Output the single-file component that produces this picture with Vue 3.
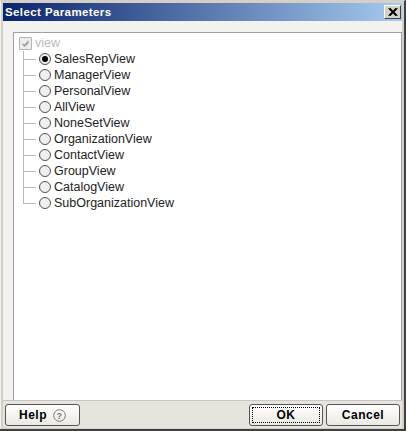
<script setup>
const views = ['SalesRepView','ManagerView','PersonalView','AllView','NoneSetView','OrganizationView','ContactView','GroupView','CatalogView','SubOrganizationView']
</script>

<template>
  <div class="window">
    <header class="titlebar">
      <span class="title">Select Parameters</span>
      <button class="close" aria-label="Close">
        <svg width="10" height="8" viewBox="0 0 10 8"><path d="M1.500 0.500L8.500 7.500M8.500 0.500L1.500 7.500" fill="none" stroke="#000" stroke-width="2"/><path d="M0 0h3M7 0h3M0 8h3M7 8h3" stroke="#000" stroke-width="1.200"/></svg>
      </button>
    </header>
    <div class="content">
      <div class="tree">
        <div class="root">
          <span class="check">
            <svg width="9" height="9" viewBox="0 0 9 9"><path d="M1.500 4l2 1.500L7.500 1v3.500L3.500 8l-2-2z" fill="#a0a0a0"/></svg>
          </span>
          <span class="rootlabel">view</span>
        </div>
        <div class="children">
          <div v-for="(v, i) in views" :key="v" class="row">
            <span class="connector"></span>
            <span class="radio" :class="{ on: i === 0 }"></span>
            <span class="label">{{ v }}</span>
          </div>
        </div>
      </div>
    </div>
    <footer class="footer">
      <button class="btn help">Help
        <svg class="q" width="13" height="13" viewBox="0 0 13 13"><circle cx="6.500" cy="6.500" r="5.800" fill="none" stroke="#777"/><text x="6.500" y="10" text-anchor="middle" font-size="9" fill="#777" font-family="Liberation Sans">?</text></svg>
      </button>
      <div class="spacer"></div>
      <button class="btn ok"><span class="focus">OK</span></button>
      <button class="btn cancel">Cancel</button>
    </footer>
  </div>
</template>

<style>
html, body { margin: 0; padding: 0; background: #d4d0c8; }
</style>

<style scoped>
.window {
  width: 406px; height: 431px; box-sizing: border-box;
  display: flex; flex-direction: column;
  padding: 2px 2px 1px 3px;
  background: #d4d0c8;
  border-right: 2px solid #404040; border-bottom: 2px solid #404040;
  border-top: 1px solid #d4d0c8;
  box-shadow: inset 1px 0 0 #f4f2ee;
  font-family: "Liberation Sans", Arial, sans-serif;
}
.titlebar {
  height: 18px; flex: none; display: flex; align-items: center; justify-content: space-between;
  padding: 0 1px 0 2px;
  background: linear-gradient(90deg, #0a246a, #a6caf0);
}
.title { color: #fff; font-weight: bold; font-size: 11.500px; letter-spacing: .4px; }
.close {
  width: 17px; height: 14px; padding: 0; border: 1px solid; border-color: #fff #404040 #404040 #fff;
  background: #d4d0c8; display: flex; align-items: center; justify-content: center;
}
.content { flex: 1; min-height: 0; background: #f4f2ef; padding: 11px 0 0 10px; display: flex; }
.tree {
  flex: 1; box-sizing: border-box; background: #fff;
  border: 1px solid #a0a0a0;
  border-bottom: 0; padding: 2px 0 0 5px;
}
.root { display: flex; align-items: center; height: 16px; gap: 3px; }
.check {
  width: 11px; height: 11px; border: 1px solid #b4b4b4; background: #eeeeee; border-radius: 1px;
  display: flex; align-items: center; justify-content: center;
}
.rootlabel { color: #bbb; font-size: 12.500px; }
.children { margin-left: 4px; }
.row { display: flex; align-items: center; height: 16px; position: relative; }
.connector {
  width: 12px; height: 8px; margin-top: -8px; margin-right: 3px;
  border-left: 1px solid #b8b8b8; border-bottom: 1px solid #b8b8b8;
}
.row:not(:last-child)::before {
  content: ""; position: absolute; left: 0; top: 0; bottom: 0; width: 1px; background: #b8b8b8;
}
.radio {
  width: 10px; height: 10px; border: 1px solid #505050; border-radius: 50%; background: #efefef; position: relative; flex: none;
}
.radio.on::after {
  content: ""; position: absolute; inset: 2px; border-radius: 50%; background: #000;
}
.label { font-size: 12.500px; color: #222; margin-left: 3px; }
.footer {
  flex: none; height: 28px; box-sizing: border-box; display: flex; align-items: center;
  background: #e6e4dd; border-top: 1px solid #c8c6c0; padding: 1px 2px 0 2px; gap: 3px;
}
.spacer { flex: 1; }
.btn {
  height: 22px; box-sizing: border-box; border: 1px solid #555; border-radius: 3px;
  background: linear-gradient(#fff, #ebe9e3);
  font: bold 12px "Liberation Sans", Arial, sans-serif; letter-spacing: .5px; color: #000; padding: 0;
  display: flex; align-items: center; justify-content: center;
}
.help { width: 75px; gap: 6px; }
.q { flex: none; }
.ok { width: 74px; }
.focus { width: 68px; height: 16px; border: 1px dotted #000; box-sizing: border-box; display: flex; align-items: center; justify-content: center; }
.cancel { width: 74px; }
</style>
